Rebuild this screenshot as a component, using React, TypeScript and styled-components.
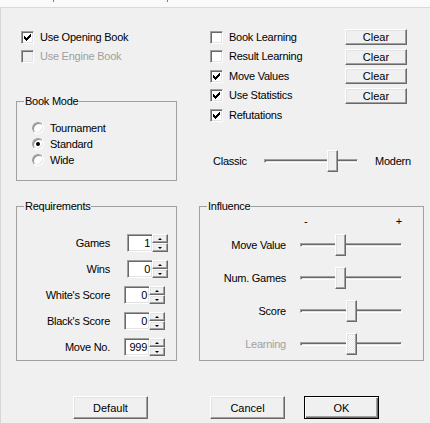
import React from "react";
import styled, { createGlobalStyle, css } from "styled-components";

const Global = createGlobalStyle`
  html, body { margin: 0; padding: 0; background: #fafafa; }
  body { font-family: "Liberation Sans", Arial, sans-serif; font-size: 11px; letter-spacing: -0.25px; color: #000; }
  * { box-sizing: border-box; }
`;

const raised = css`
  background: #f0f0f0;
  border: 1px solid;
  border-color: #fff #696969 #696969 #fff;
  box-shadow: inset -1px -1px #a0a0a0, inset 1px 1px #e3e3e3;
`;

const sunken = css`
  border: 1px solid;
  border-color: #a0a0a0 #fff #fff #a0a0a0;
  box-shadow: inset 1px 1px #696969, inset -1px -1px #e3e3e3;
`;

const Window = styled.div`
  width: 430px;
  height: 423px;
  display: flex;
  flex-direction: column;
  background: #fafafa;
  overflow: hidden;
`;

const TopStrip = styled.div`
  height: 8px;
  flex: none;
  display: flex;
  align-items: flex-start;
  border-bottom: 1px solid #d9d9d9;
  background: #fafafa;
`;

const TabMark = styled.span<{ $x: number }>`
  width: 1px;
  height: 2px;
  margin-left: ${(p) => p.$x}px;
  background: #3c8ed6;
`;

const Panel = styled.div`
  flex: 1;
  display: flex;
  flex-direction: column;
  background: #f0f0f0;
  border-left: 1px solid #d6d6d6;
  padding-left: 15px;
`;

const TopArea = styled.div`
  display: flex;
  gap: 22px;
  height: 198px;
  flex: none;
`;

const LeftCol = styled.div`
  width: 161px;
  display: flex;
  flex-direction: column;
`;

const CheckList = styled.div`
  display: flex;
  flex-direction: column;
  gap: 6px;
  padding: 23px 0 0 5px;
`;

const CheckRow = styled.label<{ $disabled?: boolean }>`
  display: flex;
  align-items: center;
  height: 13px;
  gap: 6px;
  line-height: 13px;
  color: ${(p) => (p.$disabled ? "#a0a0a0" : "#000")};
  white-space: nowrap;
`;

const Box = styled.span<{ $disabled?: boolean }>`
  ${sunken};
  width: 13px;
  height: 13px;
  flex: none;
  display: flex;
  align-items: center;
  justify-content: center;
  background: ${(p) => (p.$disabled ? "#f0f0f0" : "#fff")};
`;

const RightCol = styled.div`
  width: 225px;
  display: flex;
  flex-direction: column;
  padding: 21px 17px 0 11px;
`;

const OptionList = styled.div`
  display: flex;
  flex-direction: column;
  gap: 3.5px;
`;

const OptionRow = styled.div`
  display: flex;
  align-items: center;
  height: 16px;
`;

const SmallButton = styled.button`
  ${raised};
  margin-left: auto;
  width: 62px;
  height: 16px;
  padding: 0;
  font: inherit;
  line-height: 12px;
  color: #000;
`;

const StyleRow = styled.div`
  display: flex;
  align-items: center;
  height: 22px;
  margin-top: 27px;
  padding-left: 3px;
`;

const StyleLabel = styled.span<{ $w?: number; $ml?: number }>`
  width: ${(p) => (p.$w ? `${p.$w}px` : "auto")};
  flex: none;
  margin-left: ${(p) => p.$ml ?? 0}px;
  white-space: nowrap;
`;

const Group = styled.div<{ $w: number; $h: number }>`
  position: relative;
  width: ${(p) => p.$w}px;
  height: ${(p) => p.$h}px;
  flex: none;
  border: 1px solid #a0a0a0;
`;

const Legend = styled.span`
  position: absolute;
  top: -7px;
  left: 7px;
  padding: 0 1px;
  line-height: 13px;
  background: #f0f0f0;
  white-space: nowrap;
`;

const BookModeGroup = styled(Group)`
  margin-top: 38px;
`;

const RadioList = styled.div`
  display: flex;
  flex-direction: column;
  gap: 4px;
  padding: 20px 0 0 15px;
`;

const RadioRow = styled.label`
  display: flex;
  align-items: center;
  height: 12px;
  gap: 6px;
  line-height: 12px;
`;

const RadioCircle = styled.span`
  width: 12px;
  height: 12px;
  flex: none;
  border-radius: 50%;
  background: #fff;
  border: 1px solid;
  border-color: #a0a0a0 #fff #fff #a0a0a0;
  box-shadow: inset 1px 1px #8a8a8a, inset -1px -1px #e3e3e3;
  display: flex;
  align-items: center;
  justify-content: center;
`;

const RadioDot = styled.span`
  width: 4px;
  height: 4px;
  border-radius: 50%;
  background: #000;
`;

const GroupsArea = styled.div`
  display: flex;
  gap: 22px;
  flex: none;
`;

const ReqGrid = styled.div`
  display: grid;
  grid-template-columns: 93px auto;
  column-gap: 14px;
  row-gap: 8px;
  align-items: center;
  justify-content: start;
  padding-top: 27px;
`;

const RowLabel = styled.span<{ $disabled?: boolean }>`
  text-align: right;
  white-space: nowrap;
  color: ${(p) => (p.$disabled ? "#a0a0a0" : "#000")};
`;

const SpinWrap = styled.div<{ $shift: number }>`
  display: flex;
  height: 18px;
  margin-left: ${(p) => p.$shift}px;
`;

const Edit = styled.span`
  ${sunken};
  width: 26px;
  height: 18px;
  background: #fff;
  text-align: right;
  padding-right: 2px;
  line-height: 16px;
`;

const SpinCol = styled.span`
  display: flex;
  flex-direction: column;
  width: 16px;
  margin-left: -1px;
`;

const SpinBtn = styled.span`
  ${raised};
  height: 9px;
  display: flex;
  align-items: center;
  justify-content: center;
`;

const Arrow = styled.span<{ $down?: boolean }>`
  width: 0;
  height: 0;
  border-left: 2px solid transparent;
  border-right: 2px solid transparent;
  ${(p) => (p.$down ? "border-top: 2px solid #000;" : "border-bottom: 2px solid #000;")}
`;

const InfHeader = styled.div`
  display: flex;
  justify-content: space-between;
  width: 102px;
  height: 13px;
  line-height: 13px;
  margin: 8px 0 0 100px;
  padding-left: 4px;
`;

const InfGrid = styled.div`
  display: grid;
  grid-template-columns: 86px 102px;
  column-gap: 14px;
  row-gap: 11px;
  align-items: center;
  margin-top: 6px;
`;

const SliderBox = styled.div<{ $w: number }>`
  position: relative;
  width: ${(p) => p.$w}px;
  height: 22px;
  flex: none;
  display: flex;
  align-items: center;
`;

const Channel = styled.span`
  width: 100%;
  height: 4px;
  border: 1px solid;
  border-color: #a0a0a0 #fff #fff #a0a0a0;
  box-shadow: inset 1px 1px #696969, inset -1px -1px #e3e3e3;
  background: #f0f0f0;
`;

const Thumb = styled.span<{ $disabled?: boolean }>`
  ${raised};
  position: absolute;
  top: 0;
  width: 11px;
  height: 22px;
  ${(p) =>
    p.$disabled &&
    css`
      background-color: #f0f0f0;
      background-image: repeating-conic-gradient(#ffffff 0 25%, #e6e6e6 0 50%);
      background-size: 2px 2px;
    `}
`;

const ButtonBar = styled.div`
  display: flex;
  margin-top: 35px;
  padding-left: 57px;
`;

const DlgButton = styled.button<{ $ml?: number; $default?: boolean }>`
  ${raised};
  width: 75px;
  height: 23px;
  margin-left: ${(p) => p.$ml ?? 0}px;
  padding: 0;
  font: inherit;
  color: #000;
  ${(p) =>
    p.$default &&
    css`
      border: 1px solid #000;
      box-shadow: inset 1px 1px #fff, inset -1px -1px #696969, inset -2px -2px #a0a0a0;
    `}
`;

const CheckMark: React.FC<{ color: string }> = ({ color }) => {
  const cols = [2, 3, 4, 3, 2, 1, 0];
  return (
    <svg width="7" height="7" viewBox="0 0 7 7" shapeRendering="crispEdges">
      {cols.map((y, x) => (
        <rect key={x} x={x} y={y} width={1} height={3} fill={color} />
      ))}
    </svg>
  );
};

const Check: React.FC<{ label: string; checked?: boolean; disabled?: boolean }> = ({
  label,
  checked,
  disabled,
}) => (
  <CheckRow $disabled={disabled}>
    <Box $disabled={disabled}>{checked && <CheckMark color={disabled ? "#a0a0a0" : "#000"} />}</Box>
    <span>{label}</span>
  </CheckRow>
);

const Radio: React.FC<{ label: string; checked?: boolean }> = ({ label, checked }) => (
  <RadioRow>
    <RadioCircle>{checked && <RadioDot />}</RadioCircle>
    <span>{label}</span>
  </RadioRow>
);

const Slider: React.FC<{ width: number; value: number; disabled?: boolean }> = ({
  width,
  value,
  disabled,
}) => (
  <SliderBox $w={width}>
    <Channel />
    <Thumb $disabled={disabled} style={{ left: Math.round(value * (width - 11)) }} />
  </SliderBox>
);

const Spin: React.FC<{ value: string; shift: number }> = ({ value, shift }) => (
  <SpinWrap $shift={shift}>
    <Edit>{value}</Edit>
    <SpinCol>
      <SpinBtn>
        <Arrow />
      </SpinBtn>
      <SpinBtn>
        <Arrow $down />
      </SpinBtn>
    </SpinCol>
  </SpinWrap>
);

const learningOptions = [
  { label: "Book Learning", checked: false, clear: true },
  { label: "Result Learning", checked: false, clear: true },
  { label: "Move Values", checked: true, clear: true },
  { label: "Use Statistics", checked: true, clear: true },
  { label: "Refutations", checked: true, clear: false },
];

const requirements = [
  { label: "Games", value: "1", shift: 3 },
  { label: "Wins", value: "0", shift: 3 },
  { label: "White's Score", value: "0", shift: 0 },
  { label: "Black's Score", value: "0", shift: 0 },
  { label: "Move No.", value: "999", shift: 0 },
];

const influence = [
  { label: "Move Value", value: 35 / 91 },
  { label: "Num. Games", value: 35 / 91 },
  { label: "Score", value: 46 / 91 },
  { label: "Learning", value: 46 / 91, disabled: true },
];

export default function App() {
  return (
    <>
      <Global />
      <Window>
        <TopStrip>
          <TabMark $x={53} />
          <TabMark $x={113} />
        </TopStrip>
        <Panel>
          <TopArea>
            <LeftCol>
              <CheckList>
                <Check label="Use Opening Book" checked />
                <Check label="Use Engine Book" disabled />
              </CheckList>
              <BookModeGroup $w={161} $h={80}>
                <Legend>Book Mode</Legend>
                <RadioList>
                  <Radio label="Tournament" />
                  <Radio label="Standard" checked />
                  <Radio label="Wide" />
                </RadioList>
              </BookModeGroup>
            </LeftCol>
            <RightCol>
              <OptionList>
                {learningOptions.map((o) => (
                  <OptionRow key={o.label}>
                    <Check label={o.label} checked={o.checked} />
                    {o.clear && <SmallButton>Clear</SmallButton>}
                  </OptionRow>
                ))}
              </OptionList>
              <StyleRow>
                <StyleLabel $w={51}>Classic</StyleLabel>
                <Slider width={94} value={63 / 83} />
                <StyleLabel $ml={17}>Modern</StyleLabel>
              </StyleRow>
            </RightCol>
          </TopArea>
          <GroupsArea>
            <Group $w={161} $h={155}>
              <Legend>Requirements</Legend>
              <ReqGrid>
                {requirements.map((r) => (
                  <React.Fragment key={r.label}>
                    <RowLabel>{r.label}</RowLabel>
                    <Spin value={r.value} shift={r.shift} />
                  </React.Fragment>
                ))}
              </ReqGrid>
            </Group>
            <Group $w={225} $h={155}>
              <Legend>Influence</Legend>
              <InfHeader>
                <span>-</span>
                <span>+</span>
              </InfHeader>
              <InfGrid>
                {influence.map((r) => (
                  <React.Fragment key={r.label}>
                    <RowLabel $disabled={r.disabled}>{r.label}</RowLabel>
                    <Slider width={102} value={r.value} disabled={r.disabled} />
                  </React.Fragment>
                ))}
              </InfGrid>
            </Group>
          </GroupsArea>
          <ButtonBar>
            <DlgButton>Default</DlgButton>
            <DlgButton $ml={62}>Cancel</DlgButton>
            <DlgButton $ml={19} $default>
              OK
            </DlgButton>
          </ButtonBar>
        </Panel>
      </Window>
    </>
  );
}
